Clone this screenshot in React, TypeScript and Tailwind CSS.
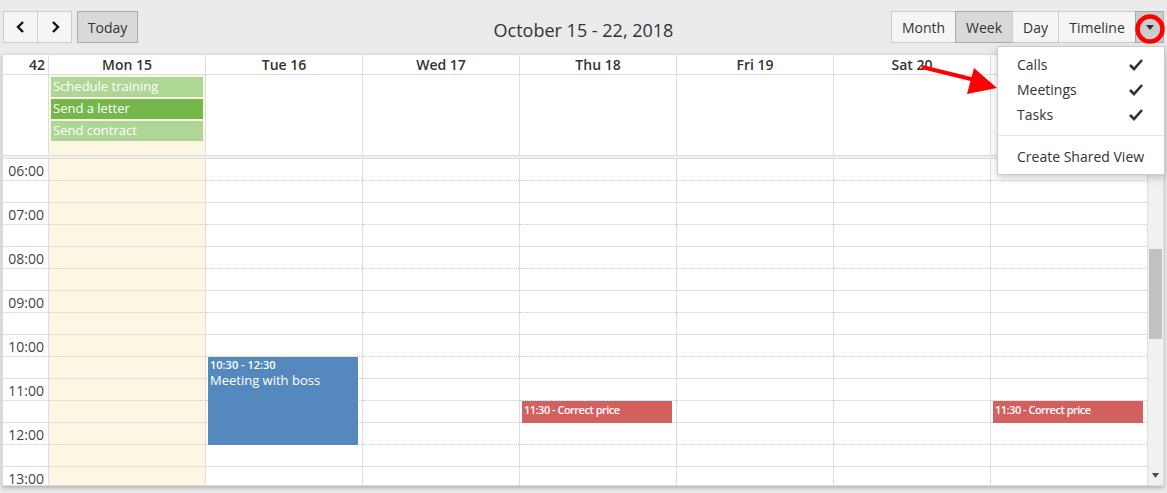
import React from 'react'

const days = ['Mon 15', 'Tue 16', 'Wed 17', 'Thu 18', 'Fri 19', 'Sat 20', 'Sun 21']
const hours = ['06:00', '07:00', '08:00', '09:00', '10:00', '11:00', '12:00', '13:00']

type Ev = { day: number; start: number; end: number; title: string; time: string; color: string; short?: boolean }

const events: Ev[] = [
  { day: 1, start: 10.5, end: 12.5, title: 'Meeting with boss', time: '10:30 - 12:30', color: 'bg-[#5589bd]' },
  { day: 3, start: 11.5, end: 12, title: 'Correct price', time: '11:30', color: 'bg-[#d35f5f]', short: true },
  { day: 6, start: 11.5, end: 12, title: 'Correct price', time: '11:30', color: 'bg-[#d35f5f]', short: true },
]

const allDay = [
  { title: 'Schedule training', color: 'bg-[#aed695]' },
  { title: 'Send a letter', color: 'bg-[#74b84b]' },
  { title: 'Send contract', color: 'bg-[#aed695]' },
]

const HOUR = 44

function Slots() {
  return (
    <>
      {hours.map(h => (
        <div key={h} className="h-[44px] shrink-0 border-b border-[#ddd]">
          <div className="h-[22px] border-b border-dotted border-[#ccc]" />
        </div>
      ))}
    </>
  )
}

function Check() {
  return (
    <svg width="16" height="14" viewBox="0 0 16 14">
      <polyline points="2,7 6,11 14,2" fill="none" stroke="#333" strokeWidth="2.6" />
    </svg>
  )
}

const base = "h-[32px] border text-[14px] text-[#333] flex items-center justify-center"
const btn = `${base} border-[#ccc] bg-[#f5f5f5]`
const btnOn = `${base} border-[#aaa] bg-[#d9d9d9]`

export default function App() {
  return (
    <div className="relative w-[1167px] h-[493px] overflow-hidden bg-[#ebebeb] text-[#333]" style={{ fontFamily: '"Open Sans", "Liberation Sans", sans-serif' }}>
      {/* toolbar */}
      <div className="h-[54px] grid grid-cols-[1fr_auto_1fr] items-start pt-[11px] px-[3px]">
        <div className="flex gap-[5px]">
          <div className="flex">
            <button className={`${btn} w-[35px]`}>
              <svg width="12" height="14" viewBox="0 0 12 14"><polyline points="8,2 3,7 8,12" fill="none" stroke="#111" strokeWidth="2.4" /></svg>
            </button>
            <button className={`${btn} w-[35px] -ml-px`}>
              <svg width="12" height="14" viewBox="0 0 12 14"><polyline points="4,2 9,7 4,12" fill="none" stroke="#111" strokeWidth="2.4" /></svg>
            </button>
          </div>
          <button className={`${btnOn} w-[61px]`}>Today</button>
        </div>
        <div className="text-[18px] pt-[7px] leading-[24px]">October 15 - 22, 2018</div>
        <div className="flex justify-end">
          <button className={`${btn} w-[65px]`}>Month</button>
          <button className={`${btnOn} w-[58px] -ml-px`}>Week</button>
          <button className={`${btn} w-[47px] -ml-px`}>Day</button>
          <button className={`${btn} w-[78px] -ml-px`}>Timeline</button>
          <button className={`${base} border-[#aaa] bg-[#cdcdcd] w-[29px] -ml-px`}>
            <svg width="8" height="5" viewBox="0 0 8 5"><polygon points="0,0 8,0 4,5" fill="#333" /></svg>
          </button>
        </div>
      </div>

      {/* calendar */}
      <div className="ml-[2px] w-[1162px] border border-[#ddd] bg-white shadow-[0_2px_4px_rgba(0,0,0,0.25)]">
        {/* header */}
        <div className="flex h-[20px] border-b border-[#ddd] text-[14px] font-semibold leading-[19px]">
          <div className="w-[45px] text-right pr-[3px]">42</div>
          {days.map(d => (
            <div key={d} className="w-[157px] border-l border-[#ddd] text-center">{d}</div>
          ))}
          <div className="w-[16px] border-l border-[#ddd]" />
        </div>

        {/* all day */}
        <div className="flex h-[80px]">
          <div className="w-[45px]" />
          {days.map((d, i) => (
            <div key={d} className={`w-[157px] border-l border-[#ddd] ${i === 0 ? 'bg-[#fdf6e3]' : ''}`}>
              {i === 0 && (
                <div className="flex flex-col gap-[2px] pt-[2px] px-[2px]">
                  {allDay.map(e => (
                    <div key={e.title} className={`${e.color} h-[20px] text-white text-[13px] leading-[18px] px-[2px]`}>{e.title}</div>
                  ))}
                </div>
              )}
            </div>
          ))}
          <div className="w-[16px] border-l border-[#ddd]" />
        </div>
        <div className="h-[4px] border-y border-[#ddd] bg-[#f1f1f1]" />

        {/* time grid */}
        <div className="flex h-[326px] overflow-hidden">
          <div className="w-[45px] flex flex-col">
            {hours.map(h => (
              <div key={h} className="h-[44px] shrink-0 border-b border-[#ddd]">
                <div className="h-[22px] border-b border-dotted border-[#ccc] text-right pr-[4px] text-[14px] leading-[20px] pt-[2px] text-[#444]">{h}</div>
              </div>
            ))}
          </div>
          {days.map((d, i) => (
            <div key={d} className={`relative w-[157px] border-l border-[#ddd] flex flex-col ${i === 0 ? 'bg-[#fdf6e3]' : ''}`}>
              <Slots />
              {events.filter(e => e.day === i).map(e => (
                <div key={e.title + e.day}
                  className={`absolute left-[2px] w-[150px] ${e.color} text-white px-[2px]`}
                  style={{ top: (e.start - 6) * HOUR, height: (e.end - e.start) * HOUR }}>
                  {e.short ? (
                    <div className="text-[11px] leading-[16px] pt-[1px] font-semibold tracking-[-0.5px]">{e.time} - {e.title}</div>
                  ) : (
                    <>
                      <div className="text-[11px] leading-[14px] pt-[1px] font-semibold">{e.time}</div>
                      <div className="text-[13px] leading-[16px]">{e.title}</div>
                    </>
                  )}
                </div>
              ))}
            </div>
          ))}
          <div className="w-[16px] border-l border-[#ddd] bg-[#f1f1f1] flex flex-col items-center">
            <div className="h-[90px] shrink-0" />
            <div className="w-[13px] h-[90px] bg-[#c1c1c1] shrink-0" />
            <div className="flex-1" />
            <svg className="mb-[7px]" width="7" height="5" viewBox="0 0 7 5"><polygon points="0,0 7,0 3.5,5" fill="#505050" /></svg>
          </div>
        </div>
      </div>

      {/* view menu */}
      <div className="absolute left-[997px] top-[46px] w-[168px] h-[129px] bg-white border border-[#ccc] shadow-[0_3px_8px_rgba(0,0,0,0.2)] text-[14px] pt-[5px]">
        {['Calls', 'Meetings', 'Tasks'].map(m => (
          <div key={m} className="h-[25px] flex items-center justify-between pl-[19px] pr-[20px]">
            <span>{m}</span>
            <Check />
          </div>
        ))}
        <div className="mt-[8px] border-t border-[#e5e5e5]" />
        <div className="h-[40px] flex items-center pl-[19px]">Create Shared View</div>
      </div>

      {/* annotations */}
      <svg className="absolute inset-0 pointer-events-none" width="1167" height="493">
        <line x1="922" y1="67" x2="975" y2="80" stroke="#f00" strokeWidth="4" />
        <polygon points="997,88 974,68 967,94" fill="#f00" />
        <circle cx="1150" cy="29" r="12.5" fill="none" stroke="#f00" strokeWidth="4.5" />
      </svg>
    </div>
  )
}
